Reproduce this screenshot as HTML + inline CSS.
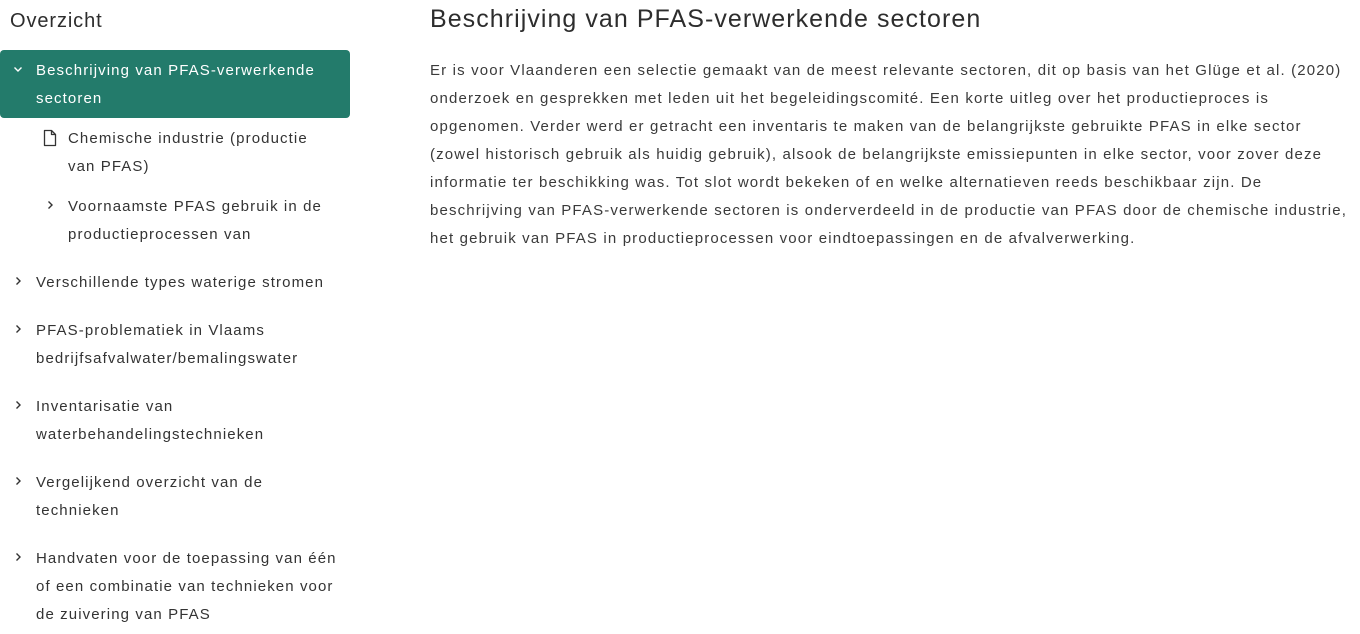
<!DOCTYPE html>
<html><head><meta charset="utf-8"><style>
body{margin:0;width:1360px;height:634px;background:#fff;font-family:"Liberation Sans",sans-serif;color:#333;position:relative;overflow:hidden}
.l{position:absolute;white-space:nowrap;font-size:15px;letter-spacing:1.1px;line-height:20px}
.p{left:430px;color:#3a3a3a;letter-spacing:1.15px}
.s{color:#333}
.hl{position:absolute;left:0;top:50px;width:350px;height:68px;background:#237b6b;border-radius:4px}
svg{position:absolute}
</style></head><body>
<div class="l" style="left:10px;top:9px;font-size:20px;letter-spacing:0.9px;line-height:24px;color:#2d2d2d">Overzicht</div>
<div class="l" style="left:430px;top:4px;font-size:25px;letter-spacing:1.05px;line-height:30px;color:#2d2d2d">Beschrijving van PFAS-verwerkende sectoren</div>

<div class="hl"></div>
<svg style="left:12px;top:63px" width="12" height="12" viewBox="0 0 12 12"><path d="M2.5 4.5l3.5 3.5 3.5-3.5" fill="none" stroke="#fff" stroke-width="1.4"/></svg>
<div class="l" style="left:36px;top:61px;color:#fff">Beschrijving van PFAS-verwerkende</div>
<div class="l" style="left:36px;top:89px;color:#fff">sectoren</div>

<svg style="left:42px;top:129px" width="16" height="18" viewBox="0 0 16 18"><path d="M2.5 1.5h7l4 4v11h-11z M9.5 1.5v4h4" fill="none" stroke="#333" stroke-width="1.3" stroke-linejoin="round"/></svg>
<div class="l s" style="left:68px;top:129px">Chemische industrie (productie</div>
<div class="l s" style="left:68px;top:157px">van PFAS)</div>

<svg style="left:44px;top:199px" width="12" height="12" viewBox="0 0 12 12"><path d="M4.5 2.5l3.5 3.5-3.5 3.5" fill="none" stroke="#333" stroke-width="1.4"/></svg>
<div class="l s" style="left:68px;top:197px">Voornaamste PFAS gebruik in de</div>
<div class="l s" style="left:68px;top:225px">productieprocessen van</div>

<svg style="left:12px;top:275px" width="12" height="12" viewBox="0 0 12 12"><path d="M4.5 2.5l3.5 3.5-3.5 3.5" fill="none" stroke="#333" stroke-width="1.4"/></svg>
<div class="l s" style="left:36px;top:273px">Verschillende types waterige stromen</div>

<svg style="left:12px;top:323px" width="12" height="12" viewBox="0 0 12 12"><path d="M4.5 2.5l3.5 3.5-3.5 3.5" fill="none" stroke="#333" stroke-width="1.4"/></svg>
<div class="l s" style="left:36px;top:321px">PFAS-problematiek in Vlaams</div>
<div class="l s" style="left:36px;top:349px">bedrijfsafvalwater/bemalingswater</div>

<svg style="left:12px;top:399px" width="12" height="12" viewBox="0 0 12 12"><path d="M4.5 2.5l3.5 3.5-3.5 3.5" fill="none" stroke="#333" stroke-width="1.4"/></svg>
<div class="l s" style="left:36px;top:397px">Inventarisatie van</div>
<div class="l s" style="left:36px;top:425px">waterbehandelingstechnieken</div>

<svg style="left:12px;top:475px" width="12" height="12" viewBox="0 0 12 12"><path d="M4.5 2.5l3.5 3.5-3.5 3.5" fill="none" stroke="#333" stroke-width="1.4"/></svg>
<div class="l s" style="left:36px;top:473px">Vergelijkend overzicht van de</div>
<div class="l s" style="left:36px;top:501px">technieken</div>

<svg style="left:12px;top:551px" width="12" height="12" viewBox="0 0 12 12"><path d="M4.5 2.5l3.5 3.5-3.5 3.5" fill="none" stroke="#333" stroke-width="1.4"/></svg>
<div class="l s" style="left:36px;top:549px">Handvaten voor de toepassing van één</div>
<div class="l s" style="left:36px;top:577px">of een combinatie van technieken voor</div>
<div class="l s" style="left:36px;top:605px">de zuivering van PFAS</div>

<div class="l p" style="top:61px">Er is voor Vlaanderen een selectie gemaakt van de meest relevante sectoren, dit op basis van het Glüge et al. (2020)</div>
<div class="l p" style="top:89px">onderzoek en gesprekken met leden uit het begeleidingscomité. Een korte uitleg over het productieproces is</div>
<div class="l p" style="top:117px">opgenomen. Verder werd er getracht een inventaris te maken van de belangrijkste gebruikte PFAS in elke sector</div>
<div class="l p" style="top:145px">(zowel historisch gebruik als huidig gebruik), alsook de belangrijkste emissiepunten in elke sector, voor zover deze</div>
<div class="l p" style="top:173px">informatie ter beschikking was. Tot slot wordt bekeken of en welke alternatieven reeds beschikbaar zijn. De</div>
<div class="l p" style="top:201px">beschrijving van PFAS-verwerkende sectoren is onderverdeeld in de productie van PFAS door de chemische industrie,</div>
<div class="l p" style="top:229px">het gebruik van PFAS in productieprocessen voor eindtoepassingen en de afvalverwerking.</div>
</body></html>
